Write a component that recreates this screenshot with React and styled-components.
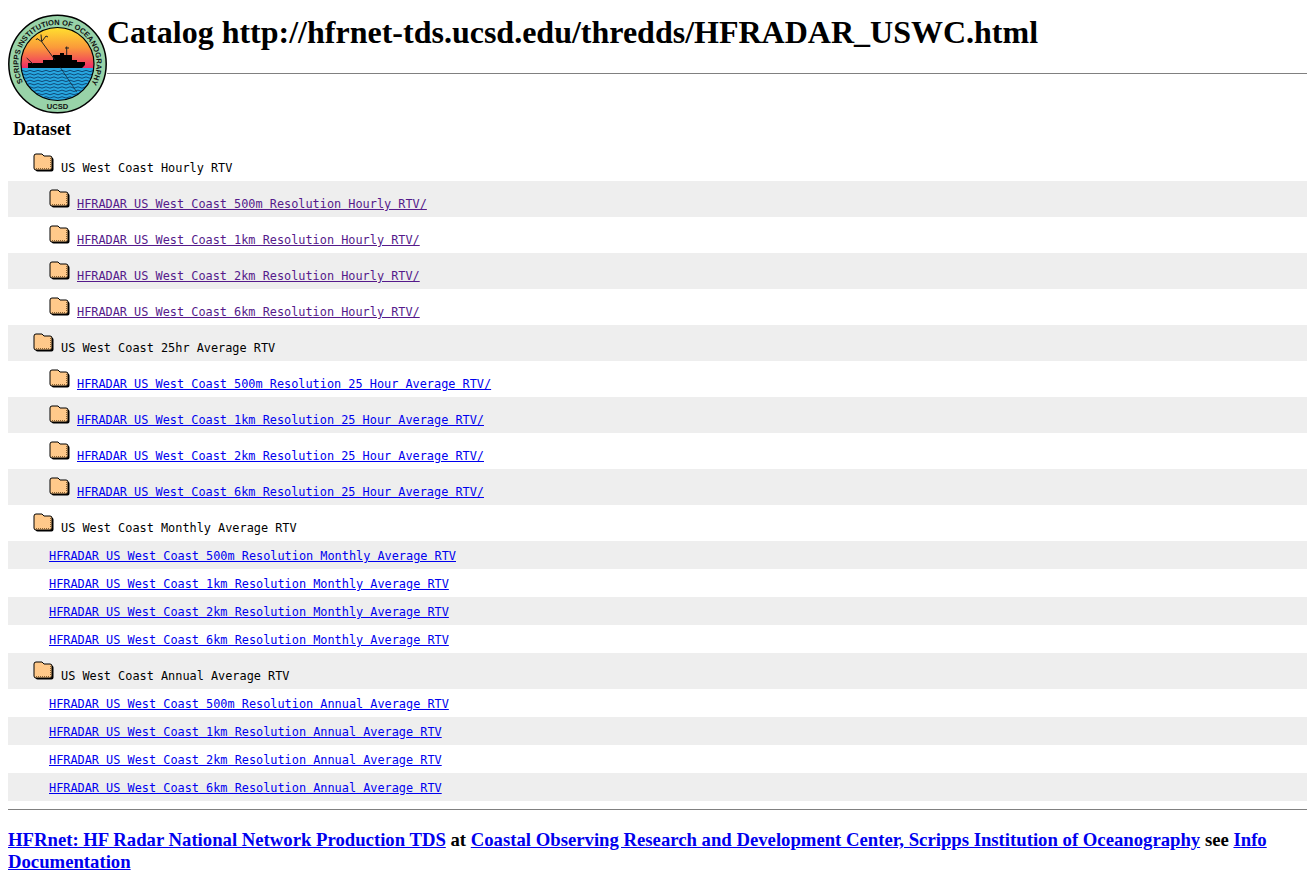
import styled, { createGlobalStyle } from "styled-components";

const GlobalStyle = createGlobalStyle`
  html, body {
    background: #fff;
    color: #000;
  }
  body {
    margin: 8px 0 8px 8px;
    font-family: "Liberation Serif", "Times New Roman", serif;
  }
`;

const Header = styled.div`
  display: flex;
  align-items: flex-start;
`;

const LogoWrap = styled.div`
  flex: none;
  width: 99px;
  height: 102px;
  margin-top: 5px;
`;

const HeaderText = styled.div`
  flex: 1;
`;

const Title = styled.h1`
  margin: 6px 0 0;
  font-size: 32px;
  line-height: 37px;
  font-weight: bold;
`;

const HeaderRule = styled.hr`
  margin: 22px 0 0;
  border: 0;
  border-top: 1px solid #808080;
`;

const Table = styled.div`
  margin-top: 0;
`;

const TableHead = styled.div`
  height: 30px;
  padding: 3px 0 0 5px;
  box-sizing: border-box;
  font-size: 18px;
  line-height: 22px;
  font-weight: bold;
`;

const Row = styled.div`
  display: flex;
  align-items: flex-start;
  height: ${(p) => (p.$folder ? 36 : 28)}px;
  padding-left: ${(p) => p.$indent}px;
  box-sizing: border-box;
  background: ${(p) => (p.$shade ? "#eeeeee" : "#ffffff")};
`;

const FolderWrap = styled.span`
  flex: none;
  width: 21px;
  height: 19px;
  margin-top: 8px;
  margin-right: 7px;
`;

const RowText = styled.span`
  font-family: "DejaVu Sans Mono", monospace;
  font-size: 11.87px;
  line-height: 14px;
  white-space: pre;
  margin-top: ${(p) => (p.$folder ? 16 : 8)}px;
`;

const RowLink = styled.a`
  color: ${(p) => (p.$visited ? "#551a8b" : "#0000ee")};
  text-decoration: underline;
`;

const FooterRule = styled.hr`
  margin: 8px 0 0;
  border: 0;
  border-top: 1px solid #808080;
`;

const Footer = styled.h3`
  margin: 19px 0 0;
  font-size: 18.72px;
  line-height: 22px;
  font-weight: bold;
`;

const FooterLink = styled.a`
  color: #0000ee;
  text-decoration: underline;
`;

const folderShape =
  "M1 3Q1 1 3 1H9L11 3H17Q19 3 19 5V15Q19 17 17 17H3Q1 17 1 15Z";

const Folder = () => (
  <svg width="21" height="19" viewBox="0 0 21 19">
    <path d={folderShape} fill="#000" transform="translate(1.5 1.5)" />
    <path d={folderShape} fill="#ffc98a" stroke="#000" strokeWidth="1" />
    <path d="M3 15.5H17.5" stroke="#8a6232" strokeWidth="1" strokeDasharray="1 1" />
    <path d="M17.500 5V15" stroke="#8a6232" strokeWidth="1" strokeDasharray="1 1" />
  </svg>
);

const Logo = () => (
  <svg width="99" height="102" viewBox="0 0 99 102">
    <defs>
      <linearGradient id="sky" x1="0" y1="0" x2="0" y2="1">
        <stop offset="0" stopColor="#ffe22e" />
        <stop offset="0.5" stopColor="#fb9a3a" />
        <stop offset="1" stopColor="#ee2a66" />
      </linearGradient>
      <clipPath id="disc">
        <circle cx="49.5" cy="51" r="36.500" />
      </clipPath>
      <path id="topArc" d="M15.100 69.300A39 39 0 1 1 83.900 69.300" fill="none" />
    </defs>
    <circle cx="49.5" cy="51" r="48.7" fill="#98d3a8" stroke="#000" strokeWidth="1.5" />
    <g clipPath="url(#disc)">
      <rect x="12" y="14" width="75" height="41" fill="url(#sky)" />
      <rect x="12" y="55" width="75" height="34" fill="#27a6df" />
      {[58, 61.3, 64.6, 67.9, 71.2, 74.5, 77.8, 81.1, 84.4].map((y) => (
        <path
          key={y}
          d={`M12 ${y}q2-1.400 4 0t4 0t4 0t4 0t4 0t4 0t4 0t4 0t4 0t4 0t4 0t4 0t4 0t4 0t4 0t4 0t4 0t4 0t4 0`}
          fill="none"
          stroke="#0a3560"
          strokeWidth="0.8"
        />
      ))}
    </g>
    <circle cx="49.5" cy="51" r="36.500" fill="none" stroke="#000" strokeWidth="1.200" />
    <path
      d="M20 55V50H35V47H45V42H52V40H56V42H64V47H69V49H77V52L74 55Z"
      fill="#000"
    />
    <path
      d="M47 47L33.700 28.700M33.700 28.700L29 25.500M33.700 28.700L33 21.500M33.700 28.700L38 23M29 25.500L28 27M38 23L40 24"
      stroke="#222"
      strokeWidth="1"
      fill="none"
    />
    <path d="M18.700 45L25 51M58.700 42V33.500M57 35H61" stroke="#222" strokeWidth="1" fill="none" />
    <path d="M52 54L68.700 79" stroke="#123" strokeWidth="0.7" fill="none" />
    <text
      fontFamily="'Liberation Sans', sans-serif"
      fontSize="7.500"
      fontWeight="bold"
      fill="#111"
    >
      <textPath href="#topArc">SCRIPPS INSTITUTION OF OCEANOGRAPHY</textPath>
    </text>
    <text
      x="49.5"
      y="96"
      textAnchor="middle"
      fontFamily="'Liberation Sans', sans-serif"
      fontSize="7.600"
      fontWeight="bold"
      fill="#111"
    >
      UCSD
    </text>
  </svg>
);

const groups = [
  {
    title: "US West Coast Hourly RTV",
    folders: true,
    visited: true,
    items: [
      "HFRADAR US West Coast 500m Resolution Hourly RTV/",
      "HFRADAR US West Coast 1km Resolution Hourly RTV/",
      "HFRADAR US West Coast 2km Resolution Hourly RTV/",
      "HFRADAR US West Coast 6km Resolution Hourly RTV/",
    ],
  },
  {
    title: "US West Coast 25hr Average RTV",
    folders: true,
    items: [
      "HFRADAR US West Coast 500m Resolution 25 Hour Average RTV/",
      "HFRADAR US West Coast 1km Resolution 25 Hour Average RTV/",
      "HFRADAR US West Coast 2km Resolution 25 Hour Average RTV/",
      "HFRADAR US West Coast 6km Resolution 25 Hour Average RTV/",
    ],
  },
  {
    title: "US West Coast Monthly Average RTV",
    items: [
      "HFRADAR US West Coast 500m Resolution Monthly Average RTV",
      "HFRADAR US West Coast 1km Resolution Monthly Average RTV",
      "HFRADAR US West Coast 2km Resolution Monthly Average RTV",
      "HFRADAR US West Coast 6km Resolution Monthly Average RTV",
    ],
  },
  {
    title: "US West Coast Annual Average RTV",
    items: [
      "HFRADAR US West Coast 500m Resolution Annual Average RTV",
      "HFRADAR US West Coast 1km Resolution Annual Average RTV",
      "HFRADAR US West Coast 2km Resolution Annual Average RTV",
      "HFRADAR US West Coast 6km Resolution Annual Average RTV",
    ],
  },
];

const buildRows = () => {
  const rows = [];
  groups.forEach((g) => {
    rows.push({ text: g.title, folder: true, indent: 25 });
    g.items.forEach((text) => {
      rows.push({ text, folder: !!g.folders, indent: 41, link: true, visited: g.visited });
    });
  });
  return rows;
};

const App = () => {
  const rows = buildRows();
  return (
    <>
      <GlobalStyle />
      <Header>
        <LogoWrap>
          <Logo />
        </LogoWrap>
        <HeaderText>
          <Title>Catalog http://hfrnet-tds.ucsd.edu/thredds/HFRADAR_USWC.html</Title>
          <HeaderRule />
        </HeaderText>
      </Header>
      <Table>
        <TableHead>Dataset</TableHead>
        {rows.map((r, i) => (
          <Row key={i} $folder={r.folder} $indent={r.indent} $shade={i % 2 === 1}>
            {r.folder && (
              <FolderWrap>
                <Folder />
              </FolderWrap>
            )}
            <RowText $folder={r.folder}>
              {r.link ? (
                <RowLink href="#" $visited={r.visited}>
                  {r.text}
                </RowLink>
              ) : (
                r.text
              )}
            </RowText>
          </Row>
        ))}
      </Table>
      <FooterRule />
      <Footer>
        <FooterLink href="#">HFRnet: HF Radar National Network Production TDS</FooterLink> at{" "}
        <FooterLink href="#">
          Coastal Observing Research and Development Center, Scripps Institution of Oceanography
        </FooterLink>{" "}
        see <FooterLink href="#">Info Documentation</FooterLink>
      </Footer>
    </>
  );
};

export default App;
